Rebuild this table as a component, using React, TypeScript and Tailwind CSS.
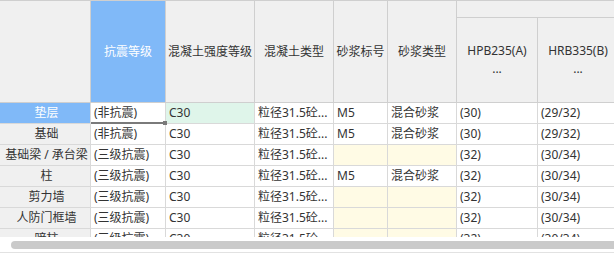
import React from 'react'

type Row = {
  name: string
  grade: string
  strength: string
  concrete: string
  mortarNo: string
  mortarType: string
  hpb: string
  hrb: string
}

const ROWS: Row[] = [
  { name: '垫层', grade: '(非抗震)', strength: 'C30', concrete: '粒径31.5砼...', mortarNo: 'M5', mortarType: '混合砂浆', hpb: '(30)', hrb: '(29/32)' },
  { name: '基础', grade: '(非抗震)', strength: 'C30', concrete: '粒径31.5砼...', mortarNo: 'M5', mortarType: '混合砂浆', hpb: '(30)', hrb: '(29/32)' },
  { name: '基础梁 / 承台梁', grade: '(三级抗震)', strength: 'C30', concrete: '粒径31.5砼...', mortarNo: '', mortarType: '', hpb: '(32)', hrb: '(30/34)' },
  { name: '柱', grade: '(三级抗震)', strength: 'C30', concrete: '粒径31.5砼...', mortarNo: 'M5', mortarType: '混合砂浆', hpb: '(32)', hrb: '(30/34)' },
  { name: '剪力墙', grade: '(三级抗震)', strength: 'C30', concrete: '粒径31.5砼...', mortarNo: '', mortarType: '', hpb: '(32)', hrb: '(30/34)' },
  { name: '人防门框墙', grade: '(三级抗震)', strength: 'C30', concrete: '粒径31.5砼...', mortarNo: '', mortarType: '', hpb: '(32)', hrb: '(30/34)' },
  { name: '暗柱', grade: '(三级抗震)', strength: 'C30', concrete: '粒径31.5砼...', mortarNo: '', mortarType: '', hpb: '(32)', hrb: '(30/34)' },
]

const cell = 'h-full shrink-0 border-r border-[#d9d9d9] pl-[3px] flex items-center whitespace-nowrap overflow-hidden'
const head = 'h-full shrink-0 border-r border-[#cfcfcf] flex items-center justify-center text-center'

export default function App() {
  return (
    <div
      className="w-[614px] h-[254px] overflow-hidden bg-white text-[12px] text-[#333]"
      style={{ fontFamily: '"Noto Sans", "Noto Sans CJK SC", sans-serif' }}
    >
      <div className="relative h-[237px] overflow-hidden">
        {/* header */}
        <div className="flex h-[103px] border-t border-b border-[#cfcfcf] bg-[#f0f0f0]">
          <div className={`${head} w-[91px]`} />
          <div className={`${head} w-[75px] bg-[#80b9f8] text-white`}>抗震等级</div>
          <div className={`${head} w-[89px]`}>混凝土强度等级</div>
          <div className={`${head} w-[79px]`}>混凝土类型</div>
          <div className={`${head} w-[54px]`}>砂浆标号</div>
          <div className={`${head} w-[69px]`}>砂浆类型</div>
          <div className="flex flex-col shrink-0 w-[240px] h-full">
            <div className="h-[17px] shrink-0 border-b border-[#cfcfcf]" />
            <div className="flex flex-1">
              <div className={`${head} w-[81px] flex-col leading-[18px]`}>
                <span>HPB235(A)</span>
                <span>...</span>
              </div>
              <div className={`${head} w-[81px] flex-col leading-[18px]`}>
                <span>HRB335(B)</span>
                <span>...</span>
              </div>
              <div className={`${head} w-[78px] border-r-0`} />
            </div>
          </div>
        </div>

        {/* body */}
        {ROWS.map((r, i) => {
          const selected = i === 0
          return (
            <div key={r.name} className="flex h-[21px] border-b border-[#d9d9d9] leading-[20px]">
              <div
                className={`${cell} w-[91px] justify-center pl-0 border-[#cfcfcf] ${
                  selected ? 'bg-[#80b9f8] text-white' : 'bg-[#f0f0f0]'
                }`}
              >
                {r.name}
              </div>
              <div className={`${cell} w-[75px]`}>{r.grade}</div>
              <div className={`${cell} w-[89px] ${selected ? 'bg-[#dff5ea]' : ''}`}>{r.strength}</div>
              <div className={`${cell} w-[79px]`}>{r.concrete}</div>
              <div className={`${cell} w-[54px] ${r.mortarNo ? '' : 'bg-[#fffbe5]'}`}>{r.mortarNo}</div>
              <div className={`${cell} w-[69px] ${r.mortarType ? '' : 'bg-[#fffbe5]'}`}>{r.mortarType}</div>
              <div className={`${cell} w-[81px]`}>{r.hpb}</div>
              <div className={`${cell} w-[81px]`}>{r.hrb}</div>
              <div className={`${cell} w-[78px] border-r-0`} />
            </div>
          )
        })}

        {/* selected cell marker */}
        <div className="absolute left-[91px] top-[122px] w-[74px] h-[2px] bg-[#7a7a7a]" />
        <div className="absolute left-[163px] top-[121px] w-[4px] h-[4px] bg-[#7a7a7a]" />
      </div>

      {/* horizontal scrollbar */}
      <div className="h-[16px] border-b border-[#e2e2e2] pt-[4px] pl-[11px]">
        <div className="h-[8px] w-[640px] rounded-l-full bg-[#cacaca]" />
      </div>
    </div>
  )
}
